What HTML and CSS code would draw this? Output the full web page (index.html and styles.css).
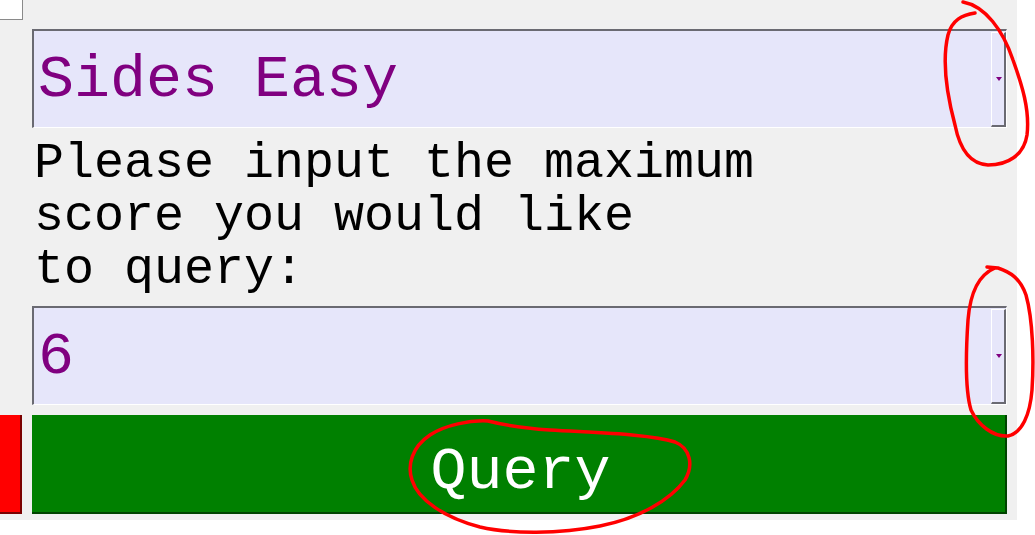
FILE: index.html
```html
<!DOCTYPE html>
<html>
<head>
<meta charset="utf-8">
<link rel="stylesheet" href="styles.css">
</head>
<body>
<div class="panel">
  <div class="side">
    <div class="corner"></div>
    <div class="red"></div>
  </div>
  <div class="main">
    <div class="combo">
      <span class="combo-text">Sides Easy</span>
      <div class="drop"><span class="arrow"></span></div>
    </div>
    <div class="label">Please input the maximum<br>score you would like<br>to query:</div>
    <div class="combo combo-second">
      <span class="combo-text">6</span>
      <div class="drop"><span class="arrow"></span></div>
    </div>
    <button class="query">Query</button>
  </div>
</div>
<svg class="marks" width="1035" height="535" viewBox="0 0 1035 535">
  <path d="M963 2 C985 6, 1003 30, 1013 60 C1022 85, 1030 110, 1027 135 C1024 155, 1008 165, 988 165 C970 164, 960 150, 955 125 C947 95, 942 60, 948 35 C952 20, 962 15, 975 13"/>
  <path d="M987 267 L998 268 C1010 272, 1020 278, 1026 295 C1033 320, 1034 360, 1032 390 C1030 415, 1022 433, 1008 436 C993 437, 978 425, 971 410 C965 390, 966 350, 968 320 C970 295, 978 275, 995 268"/>
  <path d="M488 421 C470 420, 445 425, 430 435 C412 447, 407 465, 412 480 C418 500, 445 518, 480 527 C510 534, 560 534, 600 526 C640 518, 670 500, 685 480 C694 465, 690 448, 675 442 C650 434, 600 433, 550 430 C520 428, 500 424, 488 421"/>
</svg>
</body>
</html>
```

FILE: styles.css
```css
html, body {
  margin: 0;
  padding: 0;
  background: #ffffff;
}
body {
  position: relative;
  width: 1035px;
  height: 535px;
  overflow: hidden;
  font-family: "Liberation Mono", "Courier New", monospace;
}
.panel {
  width: 1017px;
  height: 520px;
  background: #f0f0f0;
  display: grid;
  grid-template-columns: 22px 975px;
  column-gap: 10px;
  box-sizing: border-box;
}
.side {
  display: flex;
  flex-direction: column;
  justify-content: space-between;
  padding-bottom: 6px;
}
.corner {
  width: 23px;
  height: 20px;
  box-sizing: border-box;
  background: #ffffff;
  border-right: 1px solid #8a8a8a;
  border-bottom: 1px solid #8a8a8a;
}
.red {
  height: 99px;
  box-sizing: border-box;
  background: #ff0000;
  border-right: 2px solid #7a0000;
  border-bottom: 2px solid #7a0000;
}
.main {
  display: flex;
  flex-direction: column;
  padding-top: 29px;
  padding-bottom: 6px;
}
.combo {
  height: 99px;
  box-sizing: border-box;
  display: flex;
  background: #e6e6fa;
  border-top: 2px solid #6a6a72;
  border-left: 2px solid #6a6a72;
  border-right: 1px solid #ffffff;
  border-bottom: 1px solid #ffffff;
}
.combo-second {
  margin-top: 10px;
}
.combo-text {
  flex: 1;
  color: #800080;
  font-size: 60px;
  line-height: 68px;
  padding: 15px 0 0 4px;
  white-space: pre;
}
.drop {
  width: 15px;
  margin-top: 1px;
  box-sizing: border-box;
  background: #e6e6fa;
  border-top: 1px solid #ffffff;
  border-left: 1px solid #ffffff;
  border-right: 2px solid #6a6a72;
  border-bottom: 2px solid #6a6a72;
  display: flex;
  align-items: center;
  justify-content: center;
}
.arrow {
  width: 0;
  height: 0;
  border-left: 3px solid transparent;
  border-right: 3px solid transparent;
  border-top: 4px solid #800080;
  margin-left: 1px;
}
.label {
  margin-top: 9px;
  font-size: 50px;
  line-height: 53px;
  color: #000000;
  padding-left: 2px;
  white-space: nowrap;
}
.query {
  margin: 10px 0 0 0;
  height: 99px;
  box-sizing: border-box;
  background: #008000;
  border: none;
  border-right: 2px solid #004400;
  border-bottom: 2px solid #004400;
  color: #ffffff;
  font-family: "Liberation Mono", "Courier New", monospace;
  font-size: 60px;
  line-height: 68px;
  padding: 16px 0 0 4px;
  text-align: center;
  display: block;
  width: 100%;
}
.marks {
  position: absolute;
  left: 0;
  top: 0;
  pointer-events: none;
}
.marks path {
  fill: none;
  stroke: #ff0000;
  stroke-width: 3.5;
  stroke-linecap: round;
  stroke-linejoin: round;
}
```
